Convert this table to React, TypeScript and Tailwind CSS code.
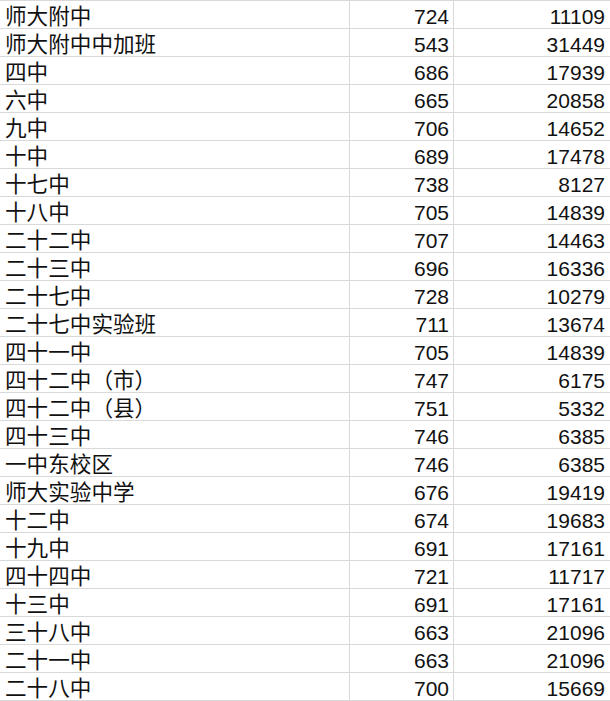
const rows: [string, number, number][] = [
  ["师大附中", 724, 11109],
  ["师大附中中加班", 543, 31449],
  ["四中", 686, 17939],
  ["六中", 665, 20858],
  ["九中", 706, 14652],
  ["十中", 689, 17478],
  ["十七中", 738, 8127],
  ["十八中", 705, 14839],
  ["二十二中", 707, 14463],
  ["二十三中", 696, 16336],
  ["二十七中", 728, 10279],
  ["二十七中实验班", 711, 13674],
  ["四十一中", 705, 14839],
  ["四十二中（市）", 747, 6175],
  ["四十二中（县）", 751, 5332],
  ["四十三中", 746, 6385],
  ["一中东校区", 746, 6385],
  ["师大实验中学", 676, 19419],
  ["十二中", 674, 19683],
  ["十九中", 691, 17161],
  ["四十四中", 721, 11717],
  ["十三中", 691, 17161],
  ["三十八中", 663, 21096],
  ["二十一中", 663, 21096],
  ["二十八中", 700, 15669],
];

export default function App() {
  return (
    <div className="w-[610px] h-[701px] overflow-hidden bg-white border-t border-[#d9d9d9] text-[#111]">
      {rows.map(([name, a, b]) => (
        <div key={name} className="flex h-[28px] border-b border-[#d9d9d9]">
          <div className="w-[350px] shrink-0 border-r border-[#d9d9d9] pl-[5px] text-[21.6px] leading-[27px] font-['Noto_Sans_CJK_SC',sans-serif] whitespace-nowrap">
            {name}
          </div>
          <div className="w-[104px] shrink-0 border-r border-[#d9d9d9] pr-[4px] text-right text-[21px] leading-[27px] pt-[2px] font-['Liberation_Sans',sans-serif]">
            {a}
          </div>
          <div className="flex-1 pr-[5px] text-right text-[21px] leading-[27px] pt-[2px] font-['Liberation_Sans',sans-serif]">
            {b}
          </div>
        </div>
      ))}
    </div>
  );
}
